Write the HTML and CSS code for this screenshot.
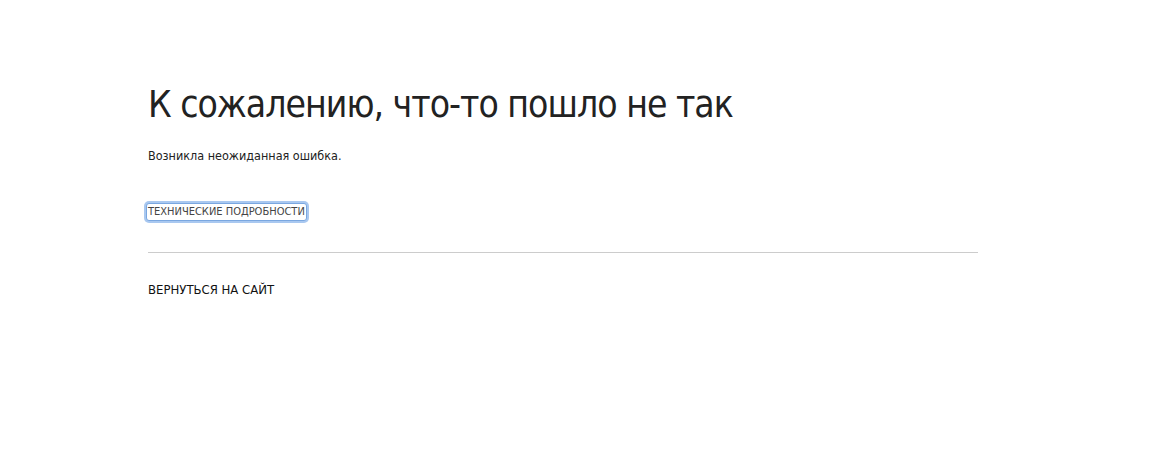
FILE: index.html
```html
<!DOCTYPE html>
<html lang="ru">
<head>
<meta charset="utf-8">
<title>Ошибка</title>
<link rel="stylesheet" href="styles.css">
</head>
<body>
<main class="page">
  <h1 class="title">К сожалению, что-то пошло не так</h1>
  <p class="message">Возникла неожиданная ошибка.</p>
  <div class="details-row">
    <button class="details-btn" type="button">ТЕХНИЧЕСКИЕ ПОДРОБНОСТИ</button>
  </div>
  <hr class="divider">
  <a class="back-link" href="#">ВЕРНУТЬСЯ НА САЙТ</a>
</main>
</body>
</html>
```

FILE: styles.css
```css
html, body {
  margin: 0;
  padding: 0;
  background: #fff;
}
body {
  font-family: "DejaVu Sans Condensed", "DejaVu Sans", sans-serif;
  color: #222;
}
.page {
  width: 830px;
  padding: 80px 0 0 148px;
}
.title {
  margin: 0;
  font-size: 37px;
  letter-spacing: -1px;
  font-weight: normal;
  line-height: 50px;
  color: #222;
}
.message {
  margin: 18px 0 0;
  font-size: 12.5px;
  line-height: 16px;
  color: #222;
}
.details-row {
  margin-top: 36px;
  height: 24px;
  display: flex;
  align-items: center;
}
.details-btn {
  margin-left: -2px;
  padding: 1px 1px;
  font-family: inherit;
  font-size: 11px;
  line-height: 14px;
  color: #444;
  background: #fff;
  border: 1px solid #7aa7e0;
  border-radius: 3px;
  box-shadow: 0 0 0 2px #a9c8f0;
}
.divider {
  margin: 28px 0 0;
  border: 0;
  border-top: 1px solid #ccc;
  height: 0;
}
.back-link {
  display: block;
  margin-top: 29px;
  font-size: 13px;
  line-height: 16px;
  color: #111;
  text-decoration: none;
}
```
